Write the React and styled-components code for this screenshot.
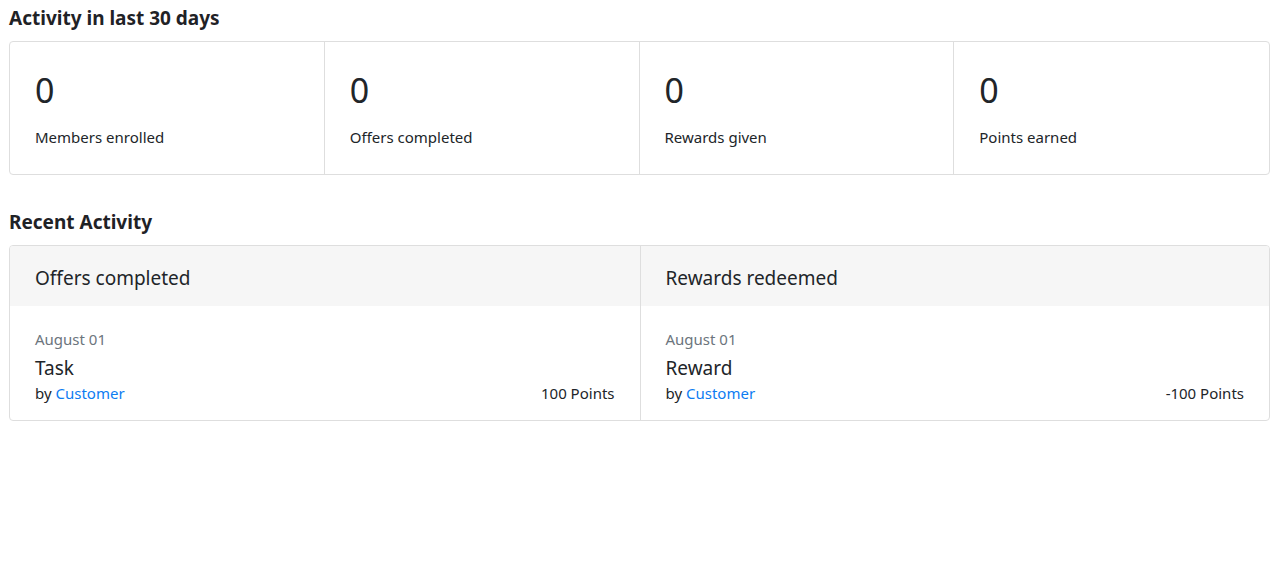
import styled, { createGlobalStyle } from "styled-components";

const GlobalStyle = createGlobalStyle`
  body {
    margin: 0;
    background: #fff;
    font-family: "Noto Sans", "Open Sans", sans-serif;
    color: #212529;
  }
`;

const stats = [
  { value: 0, label: "Members enrolled" },
  { value: 0, label: "Offers completed" },
  { value: 0, label: "Rewards given" },
  { value: 0, label: "Points earned" },
];

const feeds = [
  {
    title: "Offers completed",
    date: "August 01",
    name: "Task",
    by: "Customer",
    points: "100 Points",
  },
  {
    title: "Rewards redeemed",
    date: "August 01",
    name: "Reward",
    by: "Customer",
    points: "-100 Points",
  },
];

const App = () => {
  return (
    <Page>
      <GlobalStyle />
      <Heading>Activity in last 30 days</Heading>
      <StatsCard>
        {stats.map((s) => (
          <Stat key={s.label}>
            <StatValue>{s.value}</StatValue>
            <StatLabel>{s.label}</StatLabel>
          </Stat>
        ))}
      </StatsCard>

      <Heading $spaced>Recent Activity</Heading>
      <FeedCard>
        {feeds.map((f) => (
          <FeedColumn key={f.title}>
            <FeedHeader>{f.title}</FeedHeader>
            <FeedItem>
              <FeedDate>{f.date}</FeedDate>
              <FeedName>{f.name}</FeedName>
              <FeedMeta>
                <span>
                  by <a href="#">{f.by}</a>
                </span>
                <span>{f.points}</span>
              </FeedMeta>
            </FeedItem>
          </FeedColumn>
        ))}
      </FeedCard>
    </Page>
  );
};
export default App;

// CSS

const Page = styled.div`
  padding: 5px 9px 0;
`;

const Heading = styled.h2`
  margin: ${(p) => (p.$spaced ? "34px" : "0")} 0 10px;
  font-size: 19px;
  font-weight: 700;
  line-height: 26px;
  color: #1f2226;
`;

const StatsCard = styled.div`
  display: grid;
  grid-template-columns: repeat(4, 1fr);
  border: 1px solid #dedede;
  border-radius: 4px;
`;

const Stat = styled.div`
  padding: 26px 25px 27px;
  &:not(:last-child) {
    border-right: 1px solid #dedede;
  }
`;

const StatValue = styled.div`
  font-size: 34px;
  line-height: 44px;
  font-weight: 400;
`;

const StatLabel = styled.div`
  margin-top: 15px;
  font-size: 15px;
  line-height: 20px;
`;

const FeedCard = styled.div`
  display: grid;
  grid-template-columns: 1fr 1fr;
  border: 1px solid #dedede;
  border-radius: 4px;
  overflow: hidden;
`;

const FeedColumn = styled.div`
  & + & {
    border-left: 1px solid #dedede;
  }
`;

const FeedHeader = styled.div`
  background: #f6f6f6;
  height: 60px;
  box-sizing: border-box;
  display: flex;
  align-items: center;
  padding: 4px 25px 0;
  font-size: 19px;
`;

const FeedItem = styled.div`
  padding: 22px 25px 16px;
`;

const FeedDate = styled.div`
  font-size: 15px;
  line-height: 22px;
  color: #6c757d;
`;

const FeedName = styled.div`
  margin-top: 6px;
  font-size: 19px;
  line-height: 24px;
`;

const FeedMeta = styled.div`
  display: flex;
  justify-content: space-between;
  font-size: 15px;
  line-height: 22px;
  margin-top: 2px;

  a {
    color: #0d7cf2;
    text-decoration: none;
  }
`;
